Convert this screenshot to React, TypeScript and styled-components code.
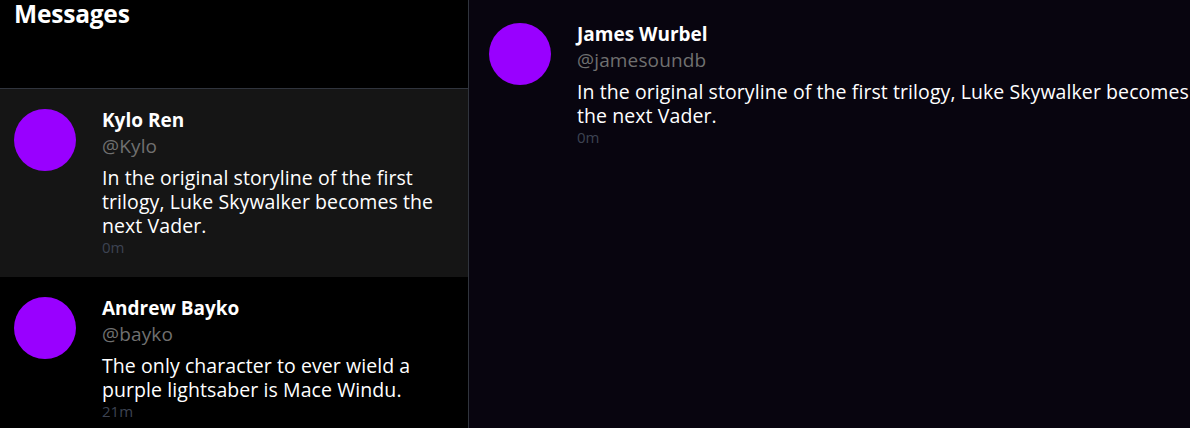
import React from "react";
import styled, { createGlobalStyle } from "styled-components";

const GlobalStyle = createGlobalStyle`
  html, body {
    margin: 0;
    padding: 0;
    height: 100%;
    overflow: hidden;
    background: #000;
  }
  body {
    font-family: "Open Sans", "Noto Sans", sans-serif;
    color: #fff;
  }
  #root { height: 100%; }
`;

const Layout = styled.div`
  display: grid;
  grid-template-columns: 469px 1fr;
  height: 100vh;
`;

const Sidebar = styled.aside`
  background: #000;
  border-right: 1px solid #30343d;
  display: flex;
  flex-direction: column;
  overflow: hidden;
`;

const SidebarHeader = styled.header`
  flex: none;
  height: 88px;
  border-bottom: 1px solid #30343d;
  padding: 0 14px;
  box-sizing: content-box;
`;

const Title = styled.h2`
  margin: 0;
  font-size: 24.5px;
  line-height: 28px;
  font-weight: 700;
  letter-spacing: -0.2px;
`;

const Row = styled.div<{ $selected?: boolean }>`
  flex: none;
  display: flex;
  gap: 26px;
  padding: 20px 20px 21px 14px;
  background: ${(p) => (p.$selected ? "#151515" : "transparent")};
`;

const Avatar = styled.div`
  flex: none;
  width: 62px;
  height: 62px;
  border-radius: 50%;
  background: #9900ff;
`;

const Body = styled.div`
  display: flex;
  flex-direction: column;
  min-width: 0;
  flex: 1;
  margin-top: -2px;
`;

const Name = styled.div`
  font-size: 19px;
  line-height: 26px;
  font-weight: 700;
  color: #fff;
`;

const Handle = styled.div`
  font-size: 19px;
  line-height: 26px;
  letter-spacing: 0.15px;
  color: #707070;
  margin-bottom: 7px;
`;

const Text = styled.p`
  margin: 0;
  font-size: 19.5px;
  line-height: 24px;
  letter-spacing: 0.08px;
  color: #fff;
`;

const Time = styled.div`
  font-size: 15px;
  line-height: 18px;
  color: #3d4352;
`;

const Detail = styled.main`
  background: #08050f;
  padding: 23px 0 0 20px;
  overflow: hidden;
`;

const DetailRow = styled.div`
  display: flex;
  gap: 26px;
`;

type Msg = { name: string; handle: string; text: string; time: string };

const messages: Msg[] = [
  {
    name: "Kylo Ren",
    handle: "@Kylo",
    text: "In the original storyline of the first trilogy, Luke Skywalker becomes the next Vader.",
    time: "0m",
  },
  {
    name: "Andrew Bayko",
    handle: "@bayko",
    text: "The only character to ever wield a purple lightsaber is Mace Windu.",
    time: "21m",
  },
];

const MessageContent = ({ m }: { m: Msg }) => (
  <Body>
    <Name>{m.name}</Name>
    <Handle>{m.handle}</Handle>
    <Text>{m.text}</Text>
    <Time>{m.time}</Time>
  </Body>
);

export default function App() {
  return (
    <>
      <GlobalStyle />
      <Layout>
        <Sidebar>
          <SidebarHeader>
            <Title>Messages</Title>
          </SidebarHeader>
          {messages.map((m, i) => (
            <Row key={m.handle} $selected={i === 0}>
              <Avatar />
              <MessageContent m={m} />
            </Row>
          ))}
        </Sidebar>
        <Detail>
          <DetailRow>
            <Avatar />
            <MessageContent
              m={{
                name: "James Wurbel",
                handle: "@jamesoundb",
                text: "In the original storyline of the first trilogy, Luke Skywalker becomes the next Vader.",
                time: "0m",
              }}
            />
          </DetailRow>
        </Detail>
      </Layout>
    </>
  );
}
